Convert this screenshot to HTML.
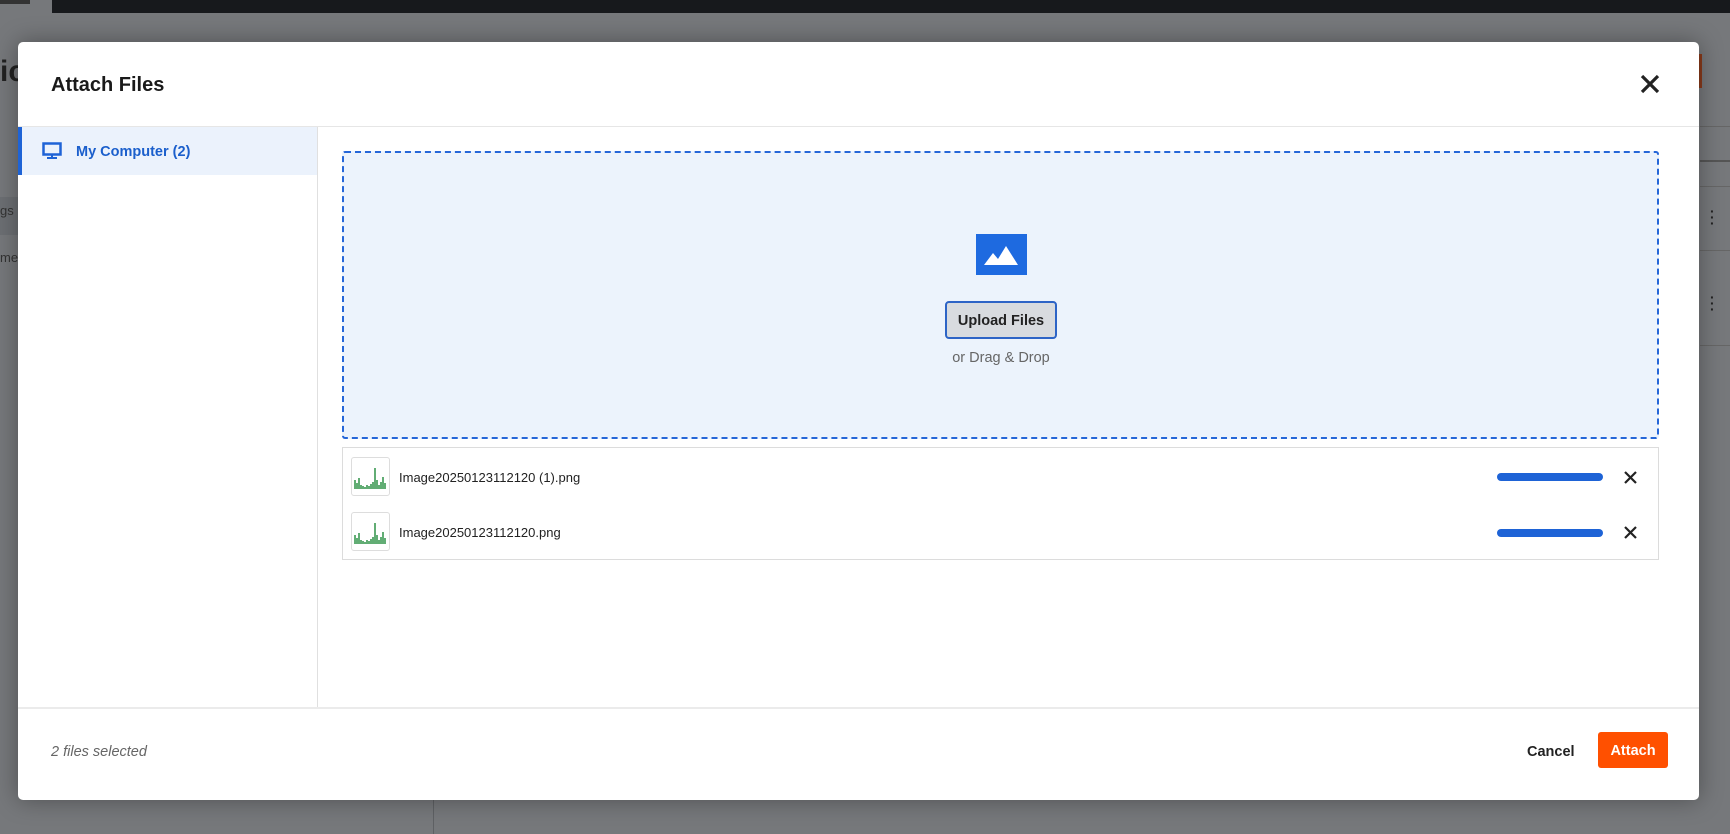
<!DOCTYPE html>
<html><head><meta charset="utf-8"><style>
*{box-sizing:border-box;margin:0;padding:0}
body{width:1730px;height:834px;overflow:hidden;background:#76787b;font-family:"Liberation Sans",sans-serif;position:relative}
.a{position:absolute}
</style></head><body>
<div class="a" style="left:52px;top:0;width:1678px;height:13px;background:#17191c"></div>
<div class="a" style="left:0;top:0;width:30px;height:4px;background:#333"></div>
<div class="a" style="left:0;top:55px;font-size:30px;font-weight:bold;color:#222">ic</div>
<div class="a" style="left:0;top:197px;width:433px;height:38px;background:#6c6f73"></div>
<div class="a" style="left:0;top:203px;font-size:13px;color:#333">gs</div>
<div class="a" style="left:0;top:250px;font-size:13px;color:#333">mer</div>
<div class="a" style="left:433px;top:760px;width:1px;height:74px;background:#5f6164"></div>
<div class="a" style="left:1690px;top:54px;width:12px;height:34px;background:#8a3a1a"></div>
<div class="a" style="left:1700px;top:126px;width:30px;height:1px;background:#666"></div>
<div class="a" style="left:1700px;top:160px;width:30px;height:2px;background:#555"></div>
<div class="a" style="left:1700px;top:186px;width:30px;height:1px;background:#666"></div>
<div class="a" style="left:1700px;top:250px;width:30px;height:1px;background:#666"></div>
<div class="a" style="left:1700px;top:345px;width:30px;height:1px;background:#666"></div>
<div class="a" style="left:1710px;top:208px;font-size:14px;line-height:6px;color:#222;font-weight:bold">·<br>·<br>·</div>
<div class="a" style="left:1710px;top:294px;font-size:14px;line-height:6px;color:#222;font-weight:bold">·<br>·<br>·</div>

<div class="a" style="left:18px;top:42px;width:1681px;height:758px;background:#fff;border-radius:5px;overflow:hidden;box-shadow:0 0 24px rgba(0,0,0,.35)">
  <div class="a" style="left:33px;top:32px;font-size:20px;font-weight:bold;color:#1a1a1a">Attach Files</div>
  <svg class="a" style="left:1622px;top:32px" width="20" height="20" viewBox="0 0 20 20"><path d="M2 2L18 18M18 2L2 18" stroke="#222" stroke-width="3.2"/></svg>
  <div class="a" style="left:0;top:84px;width:1681px;height:1px;background:#e6e6e6"></div>
  <div class="a" style="left:0;top:85px;width:299px;height:48px;background:#ebf2fc;border-left:4px solid #1e63d6"></div>
  <svg class="a" style="left:24px;top:100px" width="20" height="18" viewBox="0 0 20 18"><rect x="1.5" y="1.5" width="17" height="11" fill="none" stroke="#1e63d6" stroke-width="2.5"/><rect x="9" y="13" width="2" height="2" fill="#1e63d6"/><rect x="5" y="15" width="10" height="2" fill="#1e63d6"/></svg>
  <div class="a" style="left:58px;top:102px;font-size:14.5px;font-weight:bold;color:#1b5fcc">My Computer (2)</div>
  <div class="a" style="left:299px;top:85px;width:1px;height:581px;background:#e0e0e0"></div>
  <div class="a" style="left:324px;top:109px;width:1317px;height:288px;background:#ecf3fc;border:2px dashed #2566d8;border-radius:3px"></div>
  <svg class="a" style="left:958px;top:192px" width="51" height="41" viewBox="0 0 51 41"><rect width="51" height="41" fill="#1e6ae0"/><path d="M8 31L17 19L22 25L30 12L42 31Z" fill="#fff"/></svg>
  <div class="a" style="left:927px;top:259px;width:112px;height:38px;background:#d8dbdf;border:2px solid #2d64c6;border-radius:4px;font-size:14.5px;font-weight:bold;color:#222;text-align:center;line-height:36px">Upload Files</div>
  <div class="a" style="left:900px;top:308px;width:166px;text-align:center;font-size:14.5px;color:#666">or Drag &amp; Drop</div>
  <div class="a" style="left:324px;top:405px;width:1317px;height:113px;border:1px solid #dcdcdc"></div>
  <div class="a" style="left:333px;top:415px;width:39px;height:39px;border:1px solid #ddd;border-radius:3px;background:#fff"><svg width="37" height="37"><path d="M3 31V22M5 31V25M7 31V20M9 31V27M11 31V28M13 31V29M15 31V27M17 31V28M19 31V26M21 31V24M23 31V10M25 31V22M27 31V27M29 31V24M31 31V19M33 31V25" stroke="#1f8a3a" stroke-width="1.4"/></svg></div>
  <div class="a" style="left:333px;top:470px;width:39px;height:39px;border:1px solid #ddd;border-radius:3px;background:#fff"><svg width="37" height="37"><path d="M3 31V22M5 31V25M7 31V20M9 31V27M11 31V28M13 31V29M15 31V27M17 31V28M19 31V26M21 31V24M23 31V10M25 31V22M27 31V27M29 31V24M31 31V19M33 31V25" stroke="#1f8a3a" stroke-width="1.4"/></svg></div>
  <div class="a" style="left:381px;top:428px;font-size:13px;color:#222">Image20250123112120 (1).png</div>
  <div class="a" style="left:381px;top:483px;font-size:13px;color:#222">Image20250123112120.png</div>
  <div class="a" style="left:1479px;top:431px;width:106px;height:8px;border-radius:4px;background:#1e63d6"></div>
  <div class="a" style="left:1479px;top:487px;width:106px;height:8px;border-radius:4px;background:#1e63d6"></div>
  <svg class="a" style="left:1606px;top:429px" width="13" height="13"><path d="M1 1L12 12M12 1L1 12" stroke="#222" stroke-width="2.2"/></svg>
  <svg class="a" style="left:1606px;top:484px" width="13" height="13"><path d="M1 1L12 12M12 1L1 12" stroke="#222" stroke-width="2.2"/></svg>
  <div class="a" style="left:0;top:665px;width:1681px;height:2px;background:#ebebeb"></div>
  <div class="a" style="left:33px;top:702px;font-size:14.5px;font-style:italic;color:#666">2 files selected</div>
  <div class="a" style="left:1509px;top:702px;font-size:14.5px;font-weight:bold;color:#222">Cancel</div>
  <div class="a" style="left:1580px;top:690px;width:70px;height:36px;background:#ff5000;border-radius:3px;color:#fff;font-size:14.5px;font-weight:bold;text-align:center;line-height:38px">Attach</div>
</div>
</body></html>
